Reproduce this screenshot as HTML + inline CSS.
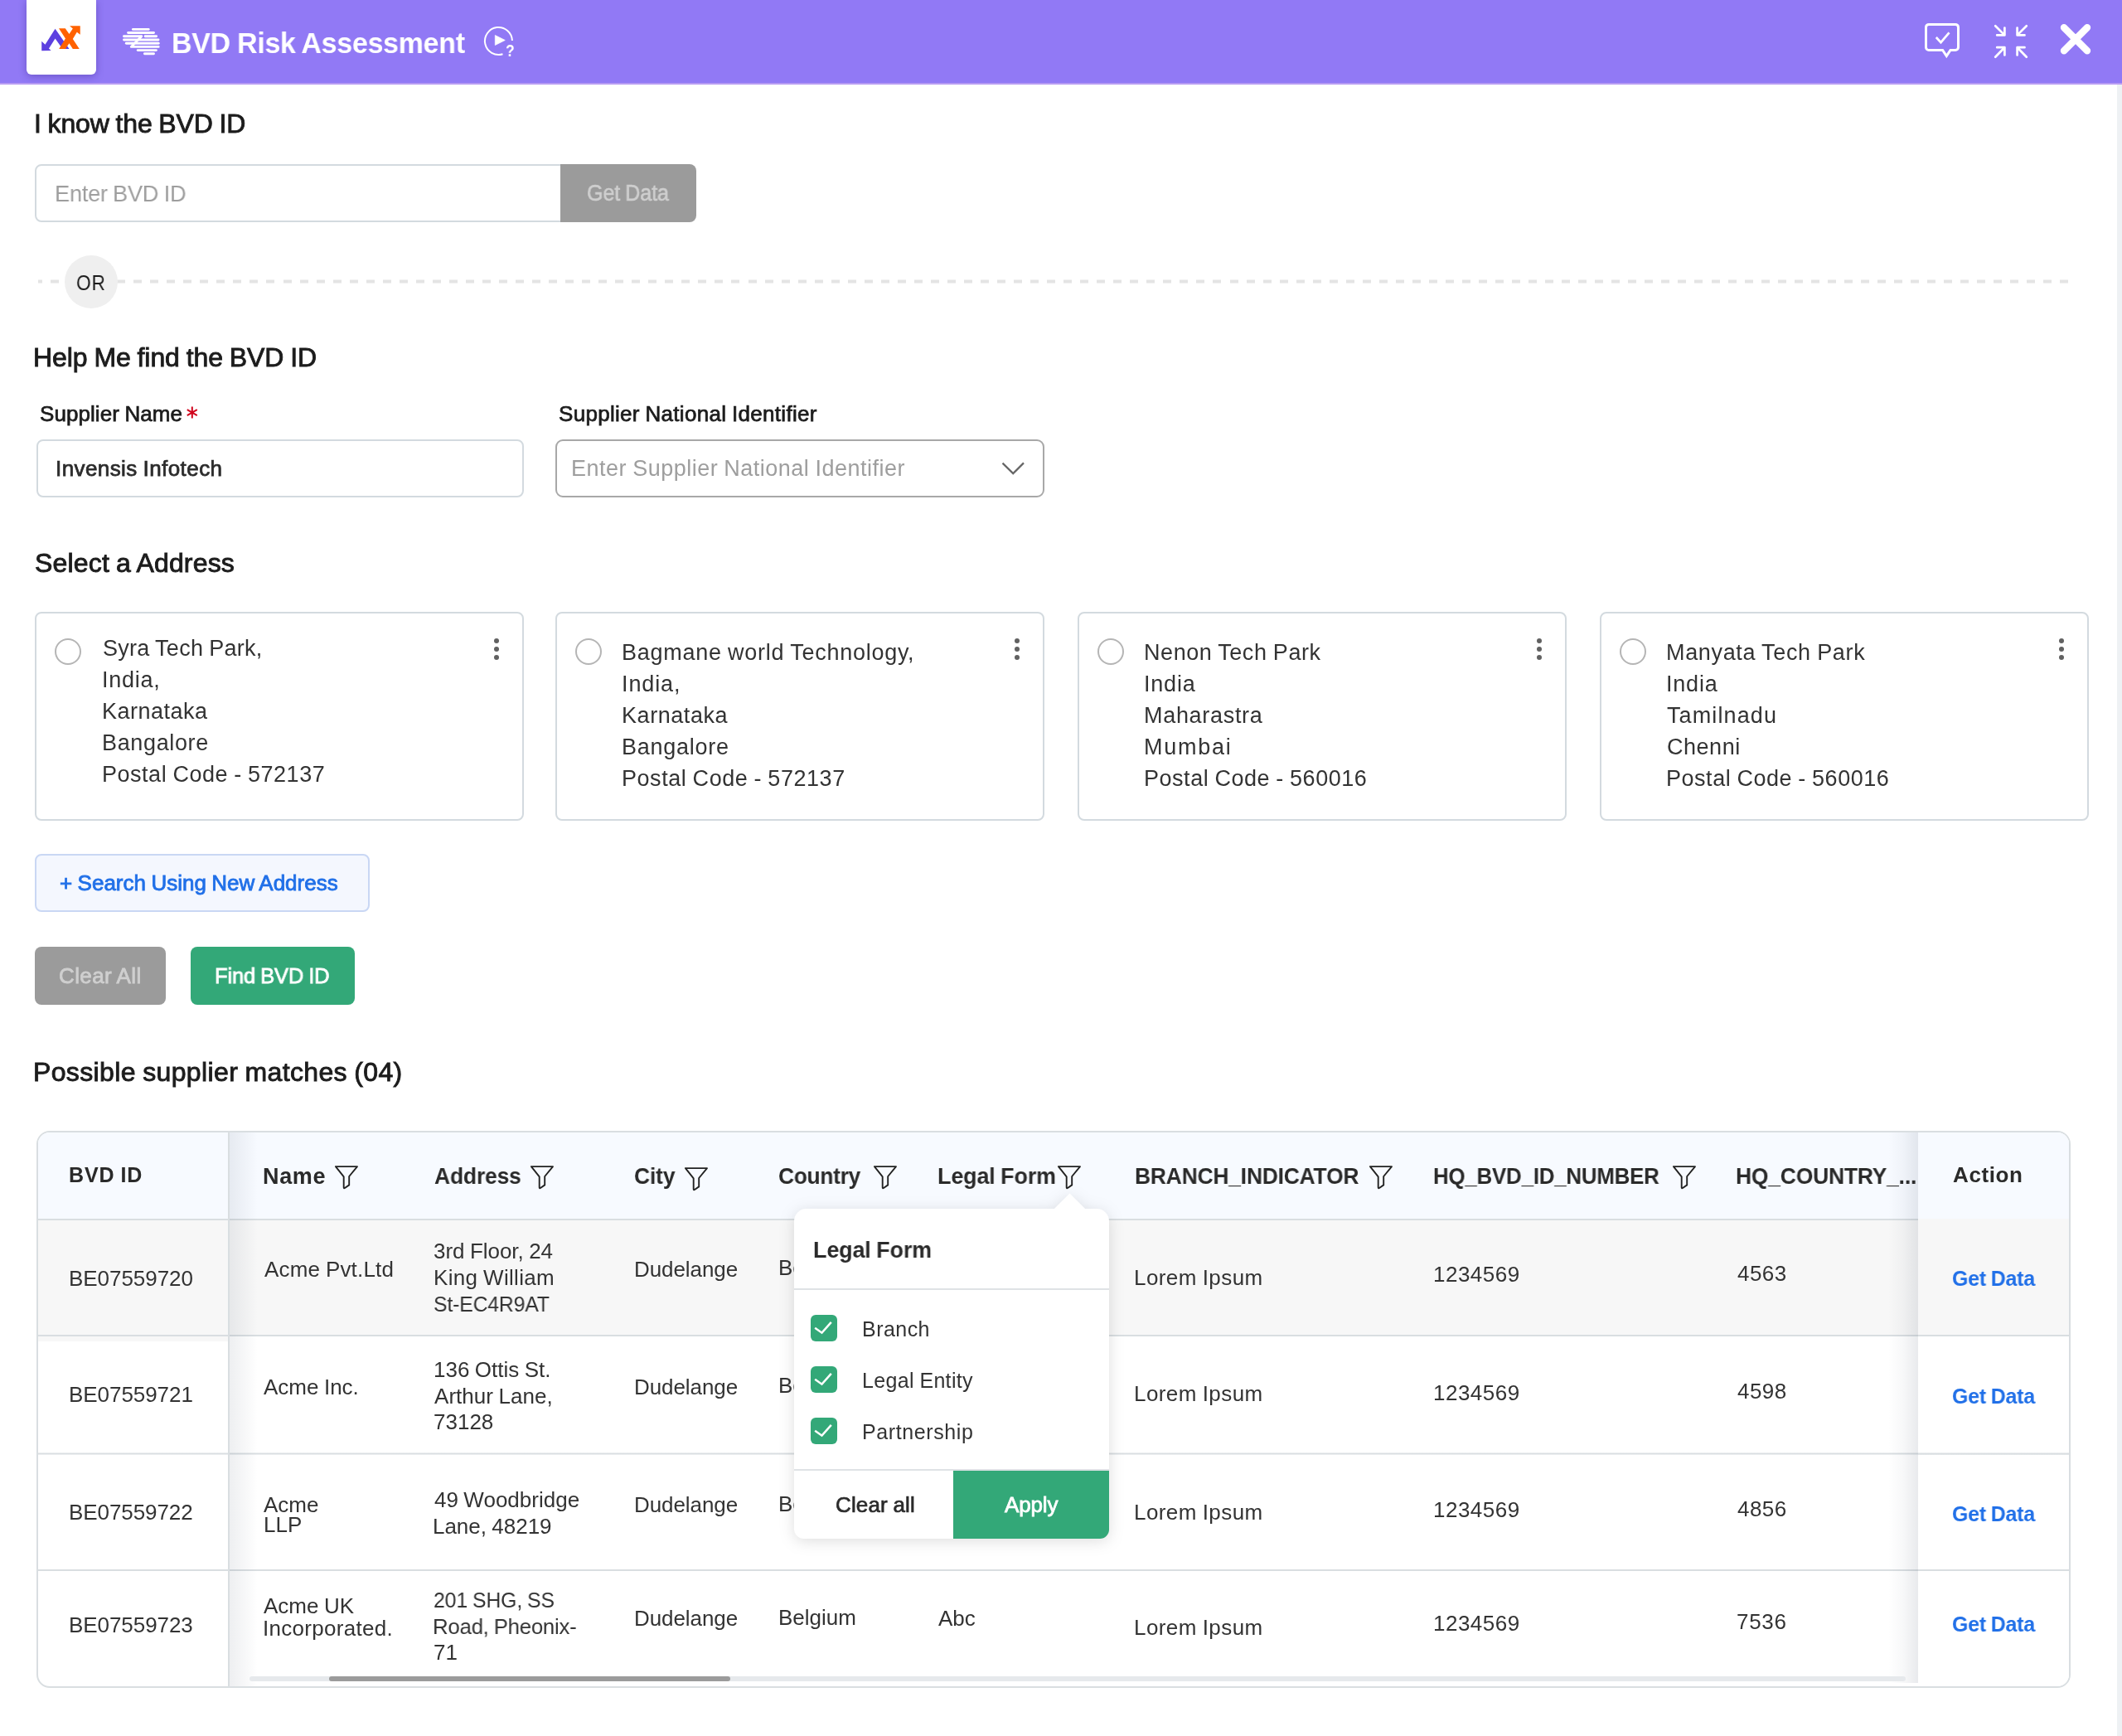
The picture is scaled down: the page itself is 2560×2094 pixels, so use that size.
<!DOCTYPE html>
<html><head><meta charset="utf-8"><title>BVD Risk Assessment</title>
<style>
html,body{margin:0;padding:0;}
body{width:2560px;height:2094px;position:relative;overflow:hidden;background:#fff;font-family:"Liberation Sans", sans-serif;}
.b{position:absolute;}
.t{position:absolute;white-space:pre;transform-origin:0 0;will-change:transform;font-family:"Liberation Sans", sans-serif;}
</style></head><body>
<div class="b" style="left:0px;top:0px;width:2560px;height:100px;background:#9179f5;"></div>
<div class="b" style="left:0px;top:100px;width:2560px;height:2px;background:#b79cf3;"></div>
<div class="b" style="left:2554px;top:102px;width:6px;height:1992px;background:#eef1f4;"></div>
<div class="b" style="left:32px;top:0px;width:84px;height:90px;background:#fff;border-radius:0 0 6px 6px;box-shadow:0 2px 10px rgba(40,20,120,.35);"></div>
<svg class="b" style="left:0;top:0" width="700" height="100" viewBox="0 0 700 100">
<defs><clipPath id="zc"><rect x="140" y="45.85" width="60" height="8.4"/></clipPath></defs>
<polygon fill="#5d40e0" points="66.56,34.84 83.54,59.09 75.46,59.09 66.56,46.56 58.97,58.43 61.61,61.07 50.23,61.24 50.23,49.85 54.51,53.65"/>
<polygon fill="#ff6200" points="71.01,34.18 78.76,34.18 83.48,41.11 87.83,34.51 84.04,31.22 96.74,31.22 96.74,41.77 92.78,38.80 87.83,46.89 95.75,59.09 87.83,59.09 83.48,52.16 78.93,59.09 71.17,59.09 78.93,46.56"/>
<g stroke="#fff" stroke-width="2.9" stroke-linecap="round" stroke-linejoin="round" fill="none">
<path d="M160.4,35.4H179.2"/>
<path d="M154.6,39.55H185.5"/>
<path d="M170.8,43.7L158.3,56.4" stroke="#9179f5" stroke-width="5.6" stroke-linecap="butt" clip-path="url(#zc)"/>
<path d="M149.5,43.7H170.8L158.3,56.4H191.2"/>
<path d="M175.1,43.7H188.6"/>
<path d="M149.5,48H191"/>
<path d="M152.3,52.2H191.2"/>
<path d="M166.2,60.6H188.4"/>
<path d="M174.4,64.75H185.5"/>
</g>
<path d="M617.95,49 A16.5,16.5 0 1 0 606.5,65.2" stroke="#fff" stroke-width="2" fill="none"/>
<path d="M597.3,42.5 L609.3,48.5 L597.3,54.5 Z" fill="#fff" stroke="#fff" stroke-width="0.7" stroke-linejoin="round"/>
</svg>
<svg class="b" style="left:2300px;top:0" width="260" height="100" viewBox="2300 0 260 100">
<g stroke="#fff" fill="none" stroke-width="3">
<path d="M2343.6,60.5 H2327 a3.5,3.5 0 0 1 -3.5,-3.5 V32.9 a3.5,3.5 0 0 1 3.5,-3.5 H2359 a3.5,3.5 0 0 1 3.5,3.5 V57 a3.5,3.5 0 0 1 -3.5,3.5 H2353 L2348.3,67.6 Z" stroke-linejoin="miter"/>
<path d="M2335.8,45 L2341.45,51.1 L2351.5,39.4" stroke-width="2.7"/>
</g>
<g stroke="#fff" fill="none" stroke-width="2.7" stroke-linecap="round" stroke-linejoin="round">
<path d="M2407.2,31.2 L2418.4,42.4 M2418.4,33.5 V42.4 H2409.2"/>
<path d="M2444.8,31.2 L2433.6,42.4 M2433.6,33.5 V42.4 H2442.5"/>
<path d="M2407.2,68.8 L2418.4,57.2 M2418.4,66.5 V57.2 H2409.2"/>
<path d="M2444.8,68.8 L2433.6,57.2 M2433.6,66.5 V57.2 H2442.5"/>
</g>
<path d="M2490,33.2 L2518,61.2 M2518,33.2 L2490,61.2" stroke="#fff" stroke-width="8.4" stroke-linecap="round"/>
</svg>
<svg class="b" style="left:222px;top:488px" width="20" height="20" viewBox="222 488 20 20"><g stroke="#d0021b" stroke-width="2" fill="none"><path d="M231.8,490.6 V504.6 M225.8,494.1 L237.8,501.1 M237.8,494.1 L225.8,501.1"/></g></svg>
<div class="b" style="left:42px;top:198px;width:636px;height:70px;border:2px solid #d3dadf;border-radius:8px 0 0 8px;box-sizing:border-box;background:#fff;"></div>
<div class="b" style="left:676px;top:198px;width:164px;height:70px;background:#9b9b9b;border-radius:0 8px 8px 0;"></div>
<div class="b" style="left:46px;top:337px;width:2449px;height:4px;background:repeating-linear-gradient(90deg,#e4e4e4 0 10px,transparent 10px 20.035px);background-position:-5px 0;transform:translateY(0.5px);"></div>
<div class="b" style="left:78px;top:308px;width:64px;height:64px;background:#efefef;border-radius:50%;"></div>
<div class="b" style="left:44px;top:530px;width:588px;height:70px;border:2px solid #d3dadf;border-radius:8px;box-sizing:border-box;background:#fff;"></div>
<div class="b" style="left:670px;top:530px;width:590px;height:70px;border:2px solid #a8a8a8;border-radius:9px;box-sizing:border-box;background:#fff;"></div>
<svg class="b" style="left:1200px;top:550px" width="50" height="30" viewBox="1200 550 50 30"><path d="M1209.5,558.6 L1222.25,571.1 L1235,558.4" stroke="#666" stroke-width="2.2" fill="none"/></svg>
<div class="b" style="left:42px;top:738px;width:590px;height:252px;border:2px solid #d3dadf;border-radius:8px;box-sizing:border-box;background:#fff;"></div>
<div class="b" style="left:66px;top:770px;width:32px;height:32px;border:2px solid #b5b5b5;border-radius:50%;box-sizing:border-box;background:#fff;"></div>
<div class="b" style="left:595.8px;top:770px;width:6.0px;height:6px;background:#616161;border-radius:50%;"></div>
<div class="b" style="left:595.8px;top:780px;width:6.0px;height:6px;background:#616161;border-radius:50%;"></div>
<div class="b" style="left:595.8px;top:790px;width:6.0px;height:6px;background:#616161;border-radius:50%;"></div>
<div class="b" style="left:670px;top:738px;width:590px;height:252px;border:2px solid #d3dadf;border-radius:8px;box-sizing:border-box;background:#fff;"></div>
<div class="b" style="left:694px;top:770px;width:32px;height:32px;border:2px solid #b5b5b5;border-radius:50%;box-sizing:border-box;background:#fff;"></div>
<div class="b" style="left:1223.8px;top:770px;width:6.0px;height:6px;background:#616161;border-radius:50%;"></div>
<div class="b" style="left:1223.8px;top:780px;width:6.0px;height:6px;background:#616161;border-radius:50%;"></div>
<div class="b" style="left:1223.8px;top:790px;width:6.0px;height:6px;background:#616161;border-radius:50%;"></div>
<div class="b" style="left:1300px;top:738px;width:590px;height:252px;border:2px solid #d3dadf;border-radius:8px;box-sizing:border-box;background:#fff;"></div>
<div class="b" style="left:1324px;top:770px;width:32px;height:32px;border:2px solid #b5b5b5;border-radius:50%;box-sizing:border-box;background:#fff;"></div>
<div class="b" style="left:1853.8px;top:770px;width:6.0px;height:6px;background:#616161;border-radius:50%;"></div>
<div class="b" style="left:1853.8px;top:780px;width:6.0px;height:6px;background:#616161;border-radius:50%;"></div>
<div class="b" style="left:1853.8px;top:790px;width:6.0px;height:6px;background:#616161;border-radius:50%;"></div>
<div class="b" style="left:1930px;top:738px;width:590px;height:252px;border:2px solid #d3dadf;border-radius:8px;box-sizing:border-box;background:#fff;"></div>
<div class="b" style="left:1954px;top:770px;width:32px;height:32px;border:2px solid #b5b5b5;border-radius:50%;box-sizing:border-box;background:#fff;"></div>
<div class="b" style="left:2483.8px;top:770px;width:6.0px;height:6px;background:#616161;border-radius:50%;"></div>
<div class="b" style="left:2483.8px;top:780px;width:6.0px;height:6px;background:#616161;border-radius:50%;"></div>
<div class="b" style="left:2483.8px;top:790px;width:6.0px;height:6px;background:#616161;border-radius:50%;"></div>
<div class="b" style="left:42px;top:1030px;width:404px;height:70px;border:2px solid #c9d7f4;border-radius:8px;box-sizing:border-box;background:#f4f7fe;"></div>
<div class="b" style="left:42px;top:1142px;width:158px;height:70px;background:#9b9b9b;border-radius:8px;"></div>
<div class="b" style="left:230px;top:1142px;width:198px;height:70px;background:#33a878;border-radius:8px;"></div>
<div class="b" style="left:44px;top:1364px;width:2454px;height:672px;border:2px solid #d9dee1;border-radius:16px;box-sizing:border-box;overflow:hidden;background:#fff;">
<div class="b" style="left:0px;top:0px;width:2450px;height:104px;background:#f7faff;"></div>
<div class="b" style="left:0px;top:106px;width:2450px;height:138px;background:#f7f7f7;"></div>
<div class="b" style="left:0px;top:246px;width:229px;height:6px;background:#f7f7f7;"></div>
<div class="b" style="left:0px;top:104px;width:2450px;height:2px;background:#d9dee1;"></div>
<div class="b" style="left:0px;top:244px;width:2450px;height:2px;background:#d9dee1;"></div>
<div class="b" style="left:0px;top:527px;width:2450px;height:2px;background:#d9dee1;"></div>
<div class="b" style="left:0px;top:386px;width:2450px;height:3px;background:linear-gradient(180deg,rgba(217,222,225,.5) 0 1px,#d9dee1 1px 2px,rgba(217,222,225,.5) 2px 3px);"></div>
<div class="b" style="left:229px;top:0px;width:2px;height:668px;background:#d9dee1;"></div>
<div class="b" style="left:231px;top:0px;width:34px;height:668px;background:linear-gradient(90deg,rgba(35,50,75,.08),rgba(35,50,75,.04) 50%,rgba(35,50,75,0));"></div>
<div class="b" style="left:2232px;top:0px;width:36px;height:664px;background:linear-gradient(90deg,rgba(35,50,75,0),rgba(35,50,75,.035) 50%,rgba(35,50,75,.1));"></div>
<div class="b" style="left:2268px;top:0px;width:182px;height:104px;background:#f7faff;"></div>
<div class="b" style="left:2268px;top:104px;width:182px;height:140px;background:#f7f7f7;"></div>
<div class="b" style="left:2268px;top:246px;width:182px;height:141px;background:#fff;"></div>
<div class="b" style="left:2268px;top:389px;width:182px;height:138px;background:#fff;"></div>
<div class="b" style="left:2268px;top:529px;width:182px;height:139px;background:#fff;"></div>
<div class="b" style="left:2268px;top:244px;width:182px;height:2px;background:#d9dee1;"></div>
<div class="b" style="left:2268px;top:527px;width:182px;height:2px;background:#d9dee1;"></div>
<div class="b" style="left:2268px;top:386px;width:182px;height:3px;background:linear-gradient(180deg,rgba(217,222,225,.5) 0 1px,#d9dee1 1px 2px,rgba(217,222,225,.5) 2px 3px);"></div>
<div class="b" style="left:255px;top:656px;width:1998px;height:6px;background:#e6e9ec;border-radius:3px;"></div>
<div class="b" style="left:351px;top:656px;width:484px;height:6px;background:#9b9b9b;border-radius:3px;"></div>
</div>
<svg class="b" style="left:404px;top:1405px" width="30" height="30" viewBox="0 0 30 30"><path d="M0.95,2.1 H27 L17.2,14 V24.4 L12,28 Q10.7,28.6 10.7,27.2 V14.4 Z" stroke="#222" stroke-width="1.9" fill="none" stroke-linejoin="round"/></svg>
<svg class="b" style="left:640.2px;top:1405px" width="30" height="30" viewBox="0 0 30 30"><path d="M0.95,2.1 H27 L17.2,14 V24.4 L12,28 Q10.7,28.6 10.7,27.2 V14.4 Z" stroke="#222" stroke-width="1.9" fill="none" stroke-linejoin="round"/></svg>
<svg class="b" style="left:826.4px;top:1407px" width="30" height="30" viewBox="0 0 30 30"><path d="M0.95,2.1 H27 L17.2,14 V24.4 L12,28 Q10.7,28.6 10.7,27.2 V14.4 Z" stroke="#222" stroke-width="1.9" fill="none" stroke-linejoin="round"/></svg>
<svg class="b" style="left:1054.4px;top:1405px" width="30" height="30" viewBox="0 0 30 30"><path d="M0.95,2.1 H27 L17.2,14 V24.4 L12,28 Q10.7,28.6 10.7,27.2 V14.4 Z" stroke="#222" stroke-width="1.9" fill="none" stroke-linejoin="round"/></svg>
<svg class="b" style="left:1276px;top:1405px" width="30" height="30" viewBox="0 0 30 30"><path d="M0.95,2.1 H27 L17.2,14 V24.4 L12,28 Q10.7,28.6 10.7,27.2 V14.4 Z" stroke="#222" stroke-width="1.9" fill="none" stroke-linejoin="round"/></svg>
<svg class="b" style="left:1652px;top:1405px" width="30" height="30" viewBox="0 0 30 30"><path d="M0.95,2.1 H27 L17.2,14 V24.4 L12,28 Q10.7,28.6 10.7,27.2 V14.4 Z" stroke="#222" stroke-width="1.9" fill="none" stroke-linejoin="round"/></svg>
<svg class="b" style="left:2018px;top:1405px" width="30" height="30" viewBox="0 0 30 30"><path d="M0.95,2.1 H27 L17.2,14 V24.4 L12,28 Q10.7,28.6 10.7,27.2 V14.4 Z" stroke="#222" stroke-width="1.9" fill="none" stroke-linejoin="round"/></svg>
<div class="t" style="left:207.26px;top:34px;font-size:35px;line-height:35px;font-weight:700;color:#ffffff;letter-spacing:-0.281px;word-spacing:-1.05px;transform:scaleX(0.9697);">BVD Risk Assessment</div>
<div class="t" style="left:610.19px;top:52px;font-size:19.5px;line-height:19.5px;font-weight:700;color:#ffffff;letter-spacing:0.000px;transform:scaleX(0.8896);">?</div>
<div class="t" style="left:41.41px;top:133px;font-size:32px;line-height:32px;font-weight:400;color:#1c1c1c;letter-spacing:-0.138px;word-spacing:-0.96px;-webkit-text-stroke:0.9px #1c1c1c;">I know the BVD ID</div>
<div class="t" style="left:65.51px;top:220px;font-size:28px;line-height:28px;font-weight:400;color:#9e9e9e;letter-spacing:-0.297px;word-spacing:-0.84px;transform:scaleX(0.9720);">Enter BVD ID</div>
<div class="t" style="left:707.83px;top:220px;font-size:27px;line-height:27px;font-weight:400;color:#cfcfcf;letter-spacing:-0.098px;word-spacing:-0.81px;-webkit-text-stroke:0.6px #cfcfcf;transform:scaleX(0.9284);">Get Data</div>
<div class="t" style="left:91.55px;top:328px;font-size:26px;line-height:26px;font-weight:400;color:#1c1c1c;letter-spacing:1.032px;transform:scaleX(0.8724);">OR</div>
<div class="t" style="left:39.88px;top:415px;font-size:32px;line-height:32px;font-weight:400;color:#1c1c1c;letter-spacing:-0.073px;word-spacing:-0.96px;-webkit-text-stroke:0.9px #1c1c1c;">Help Me find the BVD ID</div>
<div class="t" style="left:47.69px;top:486px;font-size:26px;line-height:26px;font-weight:400;color:#1c1c1c;letter-spacing:0.063px;word-spacing:-0.78px;-webkit-text-stroke:0.75px #1c1c1c;">Supplier Name</div>
<div class="t" style="left:673.89px;top:486px;font-size:26px;line-height:26px;font-weight:400;color:#1c1c1c;letter-spacing:0.297px;word-spacing:-0.78px;-webkit-text-stroke:0.75px #1c1c1c;">Supplier National Identifier</div>
<div class="t" style="left:67.23px;top:552px;font-size:26px;line-height:26px;font-weight:400;color:#2b2b2b;letter-spacing:0.418px;word-spacing:-0.78px;-webkit-text-stroke:0.75px #2b2b2b;">Invensis Infotech</div>
<div class="t" style="left:689.36px;top:552px;font-size:27px;line-height:27px;font-weight:400;color:#9e9e9e;letter-spacing:0.492px;word-spacing:-0.81px;">Enter Supplier National Identifier</div>
<div class="t" style="left:41.86px;top:663px;font-size:32px;line-height:32px;font-weight:400;color:#1c1c1c;letter-spacing:0.174px;word-spacing:-0.96px;-webkit-text-stroke:0.9px #1c1c1c;">Select a Address</div>
<div class="t" style="left:124.01px;top:769px;font-size:27px;line-height:27px;font-weight:400;color:#333333;letter-spacing:0.273px;word-spacing:-0.81px;">Syra Tech Park,</div>
<div class="t" style="left:123.00px;top:807px;font-size:27px;line-height:27px;font-weight:400;color:#333333;letter-spacing:0.748px;">India,</div>
<div class="t" style="left:123.26px;top:845px;font-size:27px;line-height:27px;font-weight:400;color:#333333;letter-spacing:0.505px;">Karnataka</div>
<div class="t" style="left:123.26px;top:883px;font-size:27px;line-height:27px;font-weight:400;color:#333333;letter-spacing:0.643px;">Bangalore</div>
<div class="t" style="left:123.26px;top:921px;font-size:27px;line-height:27px;font-weight:400;color:#333333;letter-spacing:0.523px;word-spacing:-0.81px;">Postal Code - 572137</div>
<div class="t" style="left:750.26px;top:774px;font-size:27px;line-height:27px;font-weight:400;color:#333333;letter-spacing:0.730px;word-spacing:-0.81px;">Bagmane world Technology,</div>
<div class="t" style="left:750.00px;top:812px;font-size:27px;line-height:27px;font-weight:400;color:#333333;letter-spacing:0.876px;">India,</div>
<div class="t" style="left:750.26px;top:850px;font-size:27px;line-height:27px;font-weight:400;color:#333333;letter-spacing:0.558px;">Karnataka</div>
<div class="t" style="left:750.26px;top:888px;font-size:27px;line-height:27px;font-weight:400;color:#333333;letter-spacing:0.739px;">Bangalore</div>
<div class="t" style="left:750.26px;top:926px;font-size:27px;line-height:27px;font-weight:400;color:#333333;letter-spacing:0.550px;word-spacing:-0.81px;">Postal Code - 572137</div>
<div class="t" style="left:1380.26px;top:774px;font-size:27px;line-height:27px;font-weight:400;color:#333333;letter-spacing:0.573px;word-spacing:-0.81px;">Nenon Tech Park</div>
<div class="t" style="left:1380.00px;top:812px;font-size:27px;line-height:27px;font-weight:400;color:#333333;letter-spacing:0.802px;">India</div>
<div class="t" style="left:1380.26px;top:850px;font-size:27px;line-height:27px;font-weight:400;color:#333333;letter-spacing:0.694px;">Maharastra</div>
<div class="t" style="left:1380.26px;top:888px;font-size:27px;line-height:27px;font-weight:400;color:#333333;letter-spacing:1.754px;">Mumbai</div>
<div class="t" style="left:1380.26px;top:926px;font-size:27px;line-height:27px;font-weight:400;color:#333333;letter-spacing:0.530px;word-spacing:-0.81px;">Postal Code - 560016</div>
<div class="t" style="left:2010.06px;top:774px;font-size:27px;line-height:27px;font-weight:400;color:#333333;letter-spacing:0.665px;word-spacing:-0.81px;">Manyata Tech Park</div>
<div class="t" style="left:2009.80px;top:812px;font-size:27px;line-height:27px;font-weight:400;color:#333333;letter-spacing:0.802px;">India</div>
<div class="t" style="left:2011.30px;top:850px;font-size:27px;line-height:27px;font-weight:400;color:#333333;letter-spacing:1.118px;">Tamilnadu</div>
<div class="t" style="left:2010.88px;top:888px;font-size:27px;line-height:27px;font-weight:400;color:#333333;letter-spacing:0.527px;">Chenni</div>
<div class="t" style="left:2010.06px;top:926px;font-size:27px;line-height:27px;font-weight:400;color:#333333;letter-spacing:0.530px;word-spacing:-0.81px;">Postal Code - 560016</div>
<div class="t" style="left:71.95px;top:1052px;font-size:26px;line-height:26px;font-weight:400;color:#2170e8;letter-spacing:-0.005px;word-spacing:-0.78px;-webkit-text-stroke:0.85px #2170e8;">+ Search Using New Address</div>
<div class="t" style="left:70.91px;top:1164px;font-size:26px;line-height:26px;font-weight:400;color:#cfcfcf;letter-spacing:0.399px;word-spacing:-0.78px;-webkit-text-stroke:0.8px #cfcfcf;">Clear All</div>
<div class="t" style="left:258.76px;top:1164px;font-size:26px;line-height:26px;font-weight:400;color:#ffffff;letter-spacing:-0.221px;word-spacing:-0.78px;-webkit-text-stroke:0.8px #ffffff;transform:scaleX(0.9846);">Find BVD ID</div>
<div class="t" style="left:39.88px;top:1277px;font-size:32px;line-height:32px;font-weight:400;color:#1c1c1c;letter-spacing:0.366px;word-spacing:-0.96px;-webkit-text-stroke:0.9px #1c1c1c;">Possible supplier matches (04)</div>
<div class="t" style="left:83.00px;top:1405px;font-size:25px;line-height:25px;font-weight:700;color:#2a2a2a;letter-spacing:0.879px;word-spacing:-0.75px;">BVD ID</div>
<div class="t" style="left:316.90px;top:1406px;font-size:27px;line-height:27px;font-weight:700;color:#2a2a2a;letter-spacing:0.664px;">Name</div>
<div class="t" style="left:523.70px;top:1406px;font-size:27px;line-height:27px;font-weight:700;color:#2a2a2a;letter-spacing:-0.115px;transform:scaleX(0.9764);">Address</div>
<div class="t" style="left:765.43px;top:1406px;font-size:27px;line-height:27px;font-weight:700;color:#2a2a2a;letter-spacing:-0.093px;transform:scaleX(0.9751);">City</div>
<div class="t" style="left:939.43px;top:1406px;font-size:27px;line-height:27px;font-weight:700;color:#2a2a2a;letter-spacing:-0.313px;transform:scaleX(0.9768);">Country</div>
<div class="t" style="left:1131.00px;top:1406px;font-size:27px;line-height:27px;font-weight:700;color:#2a2a2a;letter-spacing:-0.101px;word-spacing:-0.81px;transform:scaleX(0.9944);">Legal Form</div>
<div class="t" style="left:1368.60px;top:1406px;font-size:27px;line-height:27px;font-weight:700;color:#2a2a2a;letter-spacing:-0.202px;transform:scaleX(0.9782);">BRANCH_INDICATOR</div>
<div class="t" style="left:1728.50px;top:1406px;font-size:27px;line-height:27px;font-weight:700;color:#2a2a2a;letter-spacing:-0.232px;transform:scaleX(0.9589);">HQ_BVD_ID_NUMBER</div>
<div class="t" style="left:2094.30px;top:1406px;font-size:27px;line-height:27px;font-weight:700;color:#2a2a2a;letter-spacing:-0.219px;transform:scaleX(0.9803);">HQ_COUNTRY_...</div>
<div class="t" style="left:2355.50px;top:1404px;font-size:26px;line-height:26px;font-weight:700;color:#2a2a2a;letter-spacing:0.600px;">Action</div>
<div class="t" style="left:82.84px;top:1529px;font-size:26px;line-height:26px;font-weight:400;color:#333333;letter-spacing:-0.051px;">BE07559720</div>
<div class="t" style="left:318.63px;top:1518px;font-size:26px;line-height:26px;font-weight:400;color:#333333;letter-spacing:0.195px;word-spacing:-0.78px;">Acme Pvt.Ltd</div>
<div class="t" style="left:523.42px;top:1496px;font-size:26px;line-height:26px;font-weight:400;color:#333333;letter-spacing:-0.029px;word-spacing:-0.78px;">3rd Floor, 24</div>
<div class="t" style="left:522.54px;top:1528px;font-size:26px;line-height:26px;font-weight:400;color:#333333;letter-spacing:0.318px;word-spacing:-0.78px;">King William</div>
<div class="t" style="left:523.12px;top:1560px;font-size:26px;line-height:26px;font-weight:400;color:#333333;letter-spacing:-0.156px;transform:scaleX(0.9527);">St-EC4R9AT</div>
<div class="t" style="left:764.74px;top:1518px;font-size:26px;line-height:26px;font-weight:400;color:#333333;letter-spacing:-0.079px;">Dudelange</div>
<div class="t" style="left:938.84px;top:1516px;font-size:26px;line-height:26px;font-weight:400;color:#333333;letter-spacing:0.000px;">Belgium</div>
<div class="t" style="left:1368.44px;top:1528px;font-size:26px;line-height:26px;font-weight:400;color:#333333;letter-spacing:0.430px;word-spacing:-0.78px;">Lorem Ipsum</div>
<div class="t" style="left:1728.50px;top:1524px;font-size:26px;line-height:26px;font-weight:400;color:#333333;letter-spacing:0.496px;">1234569</div>
<div class="t" style="left:2095.70px;top:1523px;font-size:26px;line-height:26px;font-weight:400;color:#333333;letter-spacing:0.477px;">4563</div>
<div class="t" style="left:2355.35px;top:1529px;font-size:26px;line-height:26px;font-weight:700;color:#2170e8;letter-spacing:-0.247px;word-spacing:-0.78px;transform:scaleX(0.9585);">Get Data</div>
<div class="t" style="left:82.84px;top:1669px;font-size:26px;line-height:26px;font-weight:400;color:#333333;letter-spacing:-0.057px;">BE07559721</div>
<div class="t" style="left:318.13px;top:1660px;font-size:26px;line-height:26px;font-weight:400;color:#333333;letter-spacing:0.000px;word-spacing:-0.78px;">Acme Inc.</div>
<div class="t" style="left:522.60px;top:1639px;font-size:26px;line-height:26px;font-weight:400;color:#333333;letter-spacing:0.000px;word-spacing:-0.78px;">136 Ottis St.</div>
<div class="t" style="left:524.33px;top:1671px;font-size:26px;line-height:26px;font-weight:400;color:#333333;letter-spacing:0.040px;word-spacing:-0.78px;">Arthur Lane,</div>
<div class="t" style="left:523.25px;top:1702px;font-size:26px;line-height:26px;font-weight:400;color:#333333;letter-spacing:0.000px;">73128</div>
<div class="t" style="left:764.74px;top:1660px;font-size:26px;line-height:26px;font-weight:400;color:#333333;letter-spacing:-0.079px;">Dudelange</div>
<div class="t" style="left:938.84px;top:1658px;font-size:26px;line-height:26px;font-weight:400;color:#333333;letter-spacing:0.000px;">Belgium</div>
<div class="t" style="left:1368.44px;top:1668px;font-size:26px;line-height:26px;font-weight:400;color:#333333;letter-spacing:0.430px;word-spacing:-0.78px;">Lorem Ipsum</div>
<div class="t" style="left:1728.50px;top:1667px;font-size:26px;line-height:26px;font-weight:400;color:#333333;letter-spacing:0.496px;">1234569</div>
<div class="t" style="left:2095.70px;top:1665px;font-size:26px;line-height:26px;font-weight:400;color:#333333;letter-spacing:0.422px;">4598</div>
<div class="t" style="left:2355.35px;top:1671px;font-size:26px;line-height:26px;font-weight:700;color:#2170e8;letter-spacing:-0.247px;word-spacing:-0.78px;transform:scaleX(0.9585);">Get Data</div>
<div class="t" style="left:82.84px;top:1811px;font-size:26px;line-height:26px;font-weight:400;color:#333333;letter-spacing:-0.073px;">BE07559722</div>
<div class="t" style="left:318.13px;top:1802px;font-size:26px;line-height:26px;font-weight:400;color:#333333;letter-spacing:0.000px;">Acme</div>
<div class="t" style="left:317.64px;top:1826px;font-size:26px;line-height:26px;font-weight:400;color:#333333;letter-spacing:0.000px;">LLP</div>
<div class="t" style="left:524.00px;top:1796px;font-size:26px;line-height:26px;font-weight:400;color:#333333;letter-spacing:0.000px;word-spacing:-0.78px;">49 Woodbridge</div>
<div class="t" style="left:522.44px;top:1828px;font-size:26px;line-height:26px;font-weight:400;color:#333333;letter-spacing:-0.026px;word-spacing:-0.78px;">Lane, 48219</div>
<div class="t" style="left:764.74px;top:1802px;font-size:26px;line-height:26px;font-weight:400;color:#333333;letter-spacing:-0.079px;">Dudelange</div>
<div class="t" style="left:938.84px;top:1801px;font-size:26px;line-height:26px;font-weight:400;color:#333333;letter-spacing:0.000px;">Belgium</div>
<div class="t" style="left:1368.44px;top:1811px;font-size:26px;line-height:26px;font-weight:400;color:#333333;letter-spacing:0.430px;word-spacing:-0.78px;">Lorem Ipsum</div>
<div class="t" style="left:1728.50px;top:1808px;font-size:26px;line-height:26px;font-weight:400;color:#333333;letter-spacing:0.496px;">1234569</div>
<div class="t" style="left:2095.70px;top:1807px;font-size:26px;line-height:26px;font-weight:400;color:#333333;letter-spacing:0.447px;">4856</div>
<div class="t" style="left:2355.35px;top:1813px;font-size:26px;line-height:26px;font-weight:700;color:#2170e8;letter-spacing:-0.247px;word-spacing:-0.78px;transform:scaleX(0.9585);">Get Data</div>
<div class="t" style="left:82.84px;top:1947px;font-size:26px;line-height:26px;font-weight:400;color:#333333;letter-spacing:-0.066px;">BE07559723</div>
<div class="t" style="left:318.13px;top:1924px;font-size:26px;line-height:26px;font-weight:400;color:#333333;letter-spacing:0.000px;word-spacing:-0.78px;">Acme UK</div>
<div class="t" style="left:317.38px;top:1951px;font-size:26px;line-height:26px;font-weight:400;color:#333333;letter-spacing:0.293px;">Incorporated.</div>
<div class="t" style="left:523.29px;top:1917px;font-size:26px;line-height:26px;font-weight:400;color:#333333;letter-spacing:-0.141px;word-spacing:-0.78px;transform:scaleX(0.9537);">201 SHG, SS</div>
<div class="t" style="left:522.44px;top:1949px;font-size:26px;line-height:26px;font-weight:400;color:#333333;letter-spacing:-0.273px;word-spacing:-0.78px;transform:scaleX(0.9929);">Road, Pheonix-</div>
<div class="t" style="left:523.25px;top:1980px;font-size:26px;line-height:26px;font-weight:400;color:#333333;letter-spacing:0.000px;">71</div>
<div class="t" style="left:764.74px;top:1939px;font-size:26px;line-height:26px;font-weight:400;color:#333333;letter-spacing:-0.079px;">Dudelange</div>
<div class="t" style="left:938.84px;top:1938px;font-size:26px;line-height:26px;font-weight:400;color:#333333;letter-spacing:0.000px;">Belgium</div>
<div class="t" style="left:1132.03px;top:1939px;font-size:26px;line-height:26px;font-weight:400;color:#333333;letter-spacing:0.000px;">Abc</div>
<div class="t" style="left:1368.44px;top:1950px;font-size:26px;line-height:26px;font-weight:400;color:#333333;letter-spacing:0.430px;word-spacing:-0.78px;">Lorem Ipsum</div>
<div class="t" style="left:1728.50px;top:1945px;font-size:26px;line-height:26px;font-weight:400;color:#333333;letter-spacing:0.496px;">1234569</div>
<div class="t" style="left:2094.95px;top:1943px;font-size:26px;line-height:26px;font-weight:400;color:#333333;letter-spacing:0.701px;">7536</div>
<div class="t" style="left:2355.35px;top:1946px;font-size:26px;line-height:26px;font-weight:700;color:#2170e8;letter-spacing:-0.247px;word-spacing:-0.78px;transform:scaleX(0.9585);">Get Data</div>
<div class="b" style="left:0;top:0;width:2560px;height:2094px;filter:drop-shadow(0 3px 9px rgba(0,0,0,.13));">
<div class="b" style="left:1276.5px;top:1444.5px;width:27px;height:27px;background:#fff;transform:rotate(45deg);"></div>
<div class="b" style="left:958px;top:1458px;width:380px;height:398px;border-radius:15px 15px 11px 12px;background:#fff;overflow:hidden;">
<div class="b" style="left:0px;top:96px;width:380px;height:2px;background:#dfe2e5;"></div>
<div class="b" style="left:0px;top:314px;width:380px;height:2px;background:#dfe2e5;"></div>
<div class="b" style="left:192px;top:316px;width:188px;height:82px;background:#33a878;"></div>
<div class="b" style="left:20px;top:128px;width:32px;height:32px;background:#33a878;border-radius:6px;"></div>
<svg class="b" style="left:20px;top:128px" width="32" height="32" viewBox="0 0 32 32"><path d="M5.2,15.8 L13.5,21.7 L24.8,8.9" stroke="#fff" stroke-width="2.5" fill="none"/></svg>
<div class="b" style="left:20px;top:190px;width:32px;height:32px;background:#33a878;border-radius:6px;"></div>
<svg class="b" style="left:20px;top:190px" width="32" height="32" viewBox="0 0 32 32"><path d="M5.2,15.8 L13.5,21.7 L24.8,8.9" stroke="#fff" stroke-width="2.5" fill="none"/></svg>
<div class="b" style="left:20px;top:252px;width:32px;height:32px;background:#33a878;border-radius:6px;"></div>
<svg class="b" style="left:20px;top:252px" width="32" height="32" viewBox="0 0 32 32"><path d="M5.2,15.8 L13.5,21.7 L24.8,8.9" stroke="#fff" stroke-width="2.5" fill="none"/></svg>
</div>
</div>
<div class="t" style="left:981.00px;top:1495px;font-size:27px;line-height:27px;font-weight:700;color:#2a2a2a;letter-spacing:-0.100px;word-spacing:-0.81px;transform:scaleX(0.9951);">Legal Form</div>
<div class="t" style="left:1040.44px;top:1591px;font-size:25px;line-height:25px;font-weight:400;color:#333333;letter-spacing:0.462px;">Branch</div>
<div class="t" style="left:1040.44px;top:1653px;font-size:25px;line-height:25px;font-weight:400;color:#333333;letter-spacing:0.335px;word-spacing:-0.75px;">Legal Entity</div>
<div class="t" style="left:1040.44px;top:1715px;font-size:25px;line-height:25px;font-weight:400;color:#333333;letter-spacing:0.609px;">Partnership</div>
<div class="t" style="left:1007.58px;top:1802px;font-size:26px;line-height:26px;font-weight:400;color:#2b2b2b;letter-spacing:0.152px;word-spacing:-0.78px;-webkit-text-stroke:0.7px #2b2b2b;">Clear all</div>
<div class="t" style="left:1212.47px;top:1802px;font-size:26px;line-height:26px;font-weight:400;color:#ffffff;letter-spacing:-0.146px;-webkit-text-stroke:0.8px #ffffff;">Apply</div>
</body></html>
